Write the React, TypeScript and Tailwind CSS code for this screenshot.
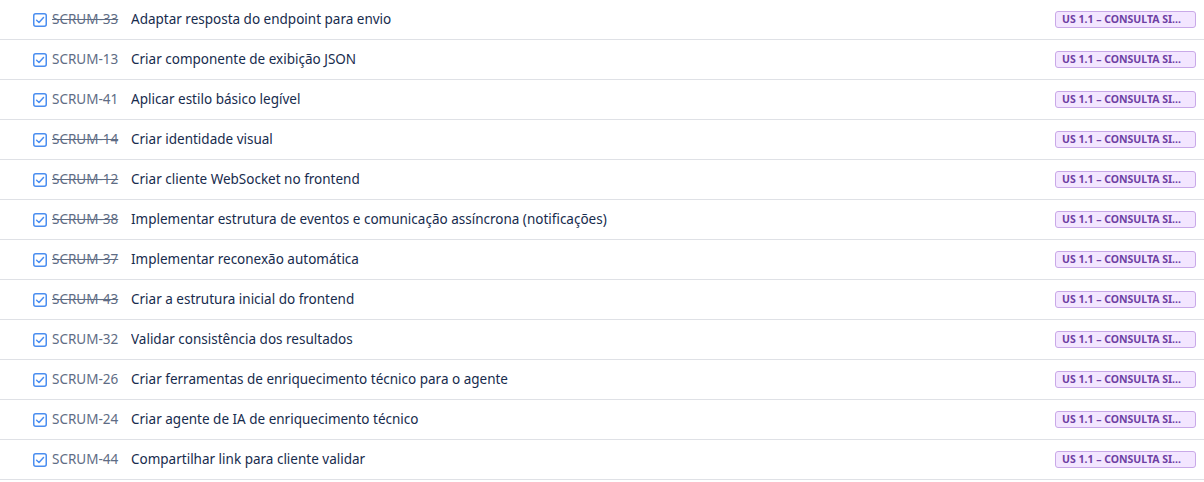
import React from "react";

type Item = { id: string; title: string; done: boolean };

const items: Item[] = [
  { id: "SCRUM-33", title: "Adaptar resposta do endpoint para envio", done: true },
  { id: "SCRUM-13", title: "Criar componente de exibição JSON", done: false },
  { id: "SCRUM-41", title: "Aplicar estilo básico legível", done: false },
  { id: "SCRUM-14", title: "Criar identidade visual", done: true },
  { id: "SCRUM-12", title: "Criar cliente WebSocket no frontend", done: true },
  { id: "SCRUM-38", title: "Implementar estrutura de eventos e comunicação assíncrona (notificações)", done: true },
  { id: "SCRUM-37", title: "Implementar reconexão automática", done: true },
  { id: "SCRUM-43", title: "Criar a estrutura inicial do frontend", done: true },
  { id: "SCRUM-32", title: "Validar consistência dos resultados", done: false },
  { id: "SCRUM-26", title: "Criar ferramentas de enriquecimento técnico para o agente", done: false },
  { id: "SCRUM-24", title: "Criar agente de IA de enriquecimento técnico", done: false },
  { id: "SCRUM-44", title: "Compartilhar link para cliente validar", done: false },
];

function CheckIcon() {
  return (
    <svg width="14" height="14" viewBox="0 0 14 14" className="shrink-0">
      <rect x="0.75" y="0.75" width="12.5" height="12.5" rx="2" fill="#fff" stroke="#4b8ef0" strokeWidth="1.5" />
      <path d="M3.6 7.2 L6 9.5 L10.5 4.6" fill="none" stroke="#4b8ef0" strokeWidth="1.5" strokeLinecap="round" strokeLinejoin="round" />
    </svg>
  );
}

export default function App() {
  return (
    <div className="w-[1204px] bg-white" style={{ fontFamily: "'Noto Sans', sans-serif" }}>
      {items.map((it) => (
        <div key={it.id} className="flex h-10 items-center border-b border-[#dfe1e6] pl-[33px] pr-[8px]">
          <CheckIcon />
          <span
            className={`ml-[5px] w-[79px] shrink-0 text-[13.5px] text-[#5e6c84] ${it.done ? "line-through" : ""}`}
          >
            {it.id}
          </span>
          <span className="flex-1 truncate text-[13.5px] text-[#172b4d]">{it.title}</span>
          <span className="flex h-[17px] w-[141px] shrink-0 items-center rounded-[3px] border border-[#c9a8e8] bg-[#f3e6ff] px-[6px] text-[10.5px] font-bold leading-none text-[#6e3fa3]">
            US 1.1 – CONSULTA SI...
          </span>
        </div>
      ))}
    </div>
  );
}
